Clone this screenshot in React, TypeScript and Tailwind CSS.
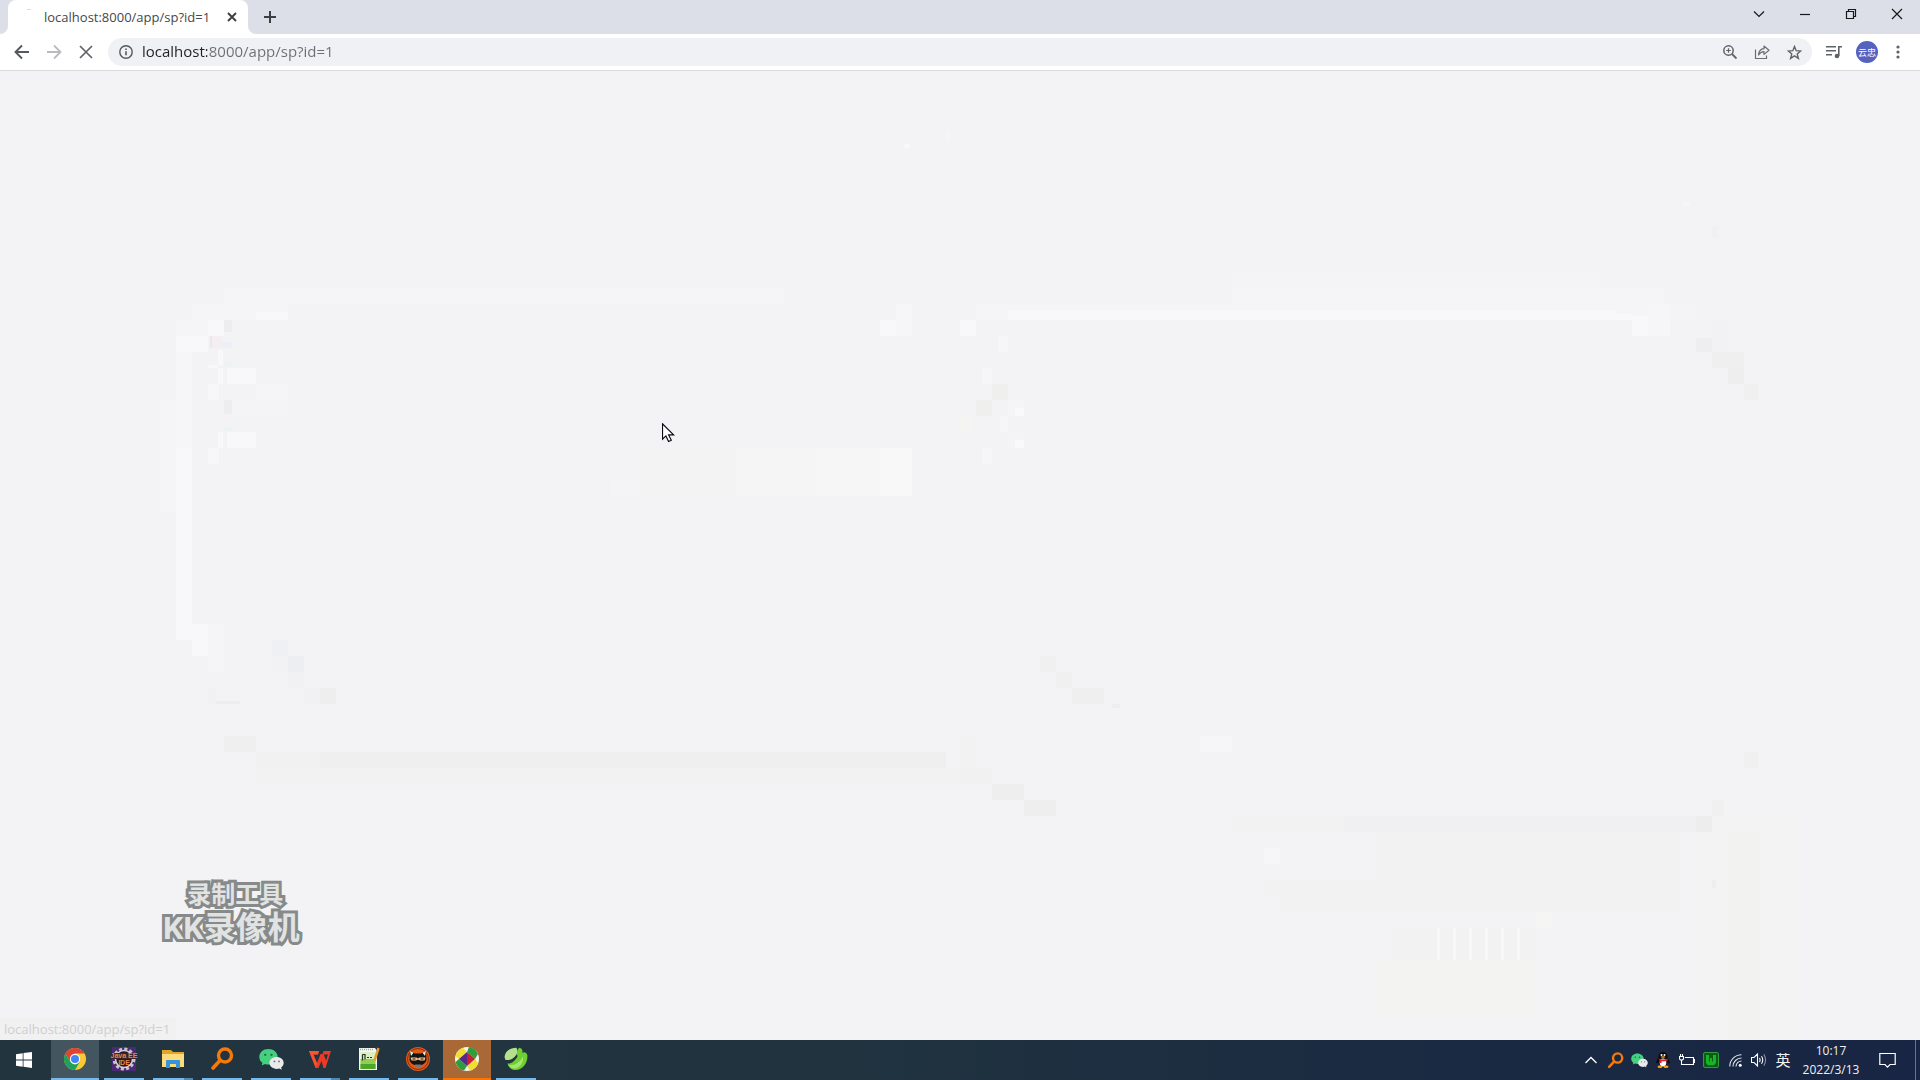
import React, { useState } from "react";

type Patch = [number, number, number, number, string];

// x, y, width, height, fill: faint patches left behind by the fading page
const patches: Patch[] = [
  [224, 288, 560, 16, "#f5f5f7"],
  [192, 304, 96, 16, "#f5f5f7"],
  [256, 312, 32, 8, "#f8f8fa"],
  [176, 320, 32, 16, "#f5f5f7"],
  [208, 320, 16, 16, "#f8f8fa"],
  [176, 336, 32, 16, "#f8f8fa"],
  [176, 352, 16, 96, "#f6f6f8"],
  [176, 448, 16, 192, "#f8f8fa"],
  [160, 400, 16, 112, "#f5f5f7"],
  [192, 624, 16, 32, "#f8f8fa"],
  [208, 624, 16, 48, "#f5f5f7"],
  [224, 320, 8, 12, "#ededef"],
  [212, 336, 10, 12, "#f4eef1"],
  [222, 342, 10, 6, "#eceff5"],
  [210, 336, 2, 12, "#e9e9eb"],
  [218, 350, 5, 15, "#f8f8fa"],
  [208, 365, 10, 3, "#f8f8fa"],
  [224, 362, 8, 4, "#ecf3f1"],
  [227, 368, 29, 16, "#f8f8fa"],
  [218, 368, 5, 16, "#f8f8fa"],
  [208, 384, 11, 16, "#f7f7f9"],
  [256, 384, 32, 16, "#f5f5f7"],
  [224, 400, 8, 14, "#ededef"],
  [232, 400, 56, 16, "#f4f4f6"],
  [224, 427, 8, 4, "#ecf3f1"],
  [227, 432, 29, 16, "#f8f8fa"],
  [218, 432, 5, 16, "#f8f8fa"],
  [208, 448, 11, 16, "#f7f7f9"],
  [896, 304, 16, 32, "#f6f6f8"],
  [880, 320, 16, 16, "#f8f8fa"],
  [960, 320, 16, 16, "#f8f8fa"],
  [904, 144, 6, 4, "#f8f8fa"],
  [946, 130, 4, 12, "#f5f5f7"],
  [610, 480, 30, 16, "#f4f4f6"],
  [640, 448, 96, 48, "#f4f3f4"],
  [736, 448, 80, 48, "#f5f5f6"],
  [816, 448, 64, 48, "#f6f6f7"],
  [880, 448, 32, 48, "#f8f8f8"],
  [272, 640, 16, 16, "#eff0f3"],
  [272, 656, 16, 16, "#f2f2f4"],
  [288, 656, 16, 16, "#edeef1"],
  [288, 672, 16, 16, "#f1f1f3"],
  [304, 688, 16, 16, "#f1f1f3"],
  [320, 688, 16, 16, "#eeeeef"],
  [208, 688, 8, 16, "#f1f1f3"],
  [216, 701, 24, 3, "#ededee"],
  [224, 736, 32, 16, "#efeff0"],
  [256, 752, 64, 16, "#f1f1f2"],
  [320, 752, 626, 16, "#efeff0"],
  [256, 768, 704, 16, "#f2f2f3"],
  [1232, 272, 368, 16, "#f4f4f6"],
  [1232, 288, 432, 16, "#f5f5f7"],
  [976, 304, 694, 6, "#f5f5f7"],
  [976, 310, 32, 10, "#f5f5f7"],
  [1008, 310, 608, 10, "#f8f8fa"],
  [1616, 310, 54, 6, "#f5f5f7"],
  [1616, 314, 16, 6, "#f8f8fa"],
  [1632, 316, 16, 20, "#f8f8fa"],
  [1648, 304, 22, 32, "#f6f6f8"],
  [1670, 304, 26, 16, "#f4f4f6"],
  [998, 336, 10, 16, "#f6f6f8"],
  [982, 368, 10, 16, "#f6f6f8"],
  [992, 384, 16, 16, "#efefee"],
  [976, 400, 16, 16, "#efefee"],
  [960, 416, 12, 16, "#f4f4f2"],
  [1008, 400, 16, 16, "#f5f5f7"],
  [1015, 408, 9, 8, "#f9f9fb"],
  [1000, 416, 8, 16, "#f6f6f8"],
  [1008, 432, 16, 16, "#f4f4f6"],
  [1015, 440, 9, 8, "#f9f9fb"],
  [982, 448, 10, 16, "#f6f6f8"],
  [1682, 202, 8, 4, "#f5f5f7"],
  [1712, 226, 6, 12, "#f0f0f2"],
  [1696, 338, 16, 14, "#eeeef0"],
  [1712, 320, 16, 32, "#f2f2f4"],
  [1712, 352, 32, 16, "#efeff0"],
  [1728, 368, 16, 16, "#eeeeef"],
  [1744, 384, 14, 16, "#f0f0f1"],
  [1040, 656, 16, 16, "#f0f0f1"],
  [1056, 672, 16, 16, "#f0f0f1"],
  [1072, 688, 32, 16, "#efeff0"],
  [1112, 704, 8, 4, "#eeeeef"],
  [1200, 736, 32, 16, "#f6f6f8"],
  [960, 736, 16, 32, "#f2f2f3"],
  [960, 768, 32, 16, "#f1f1f2"],
  [992, 784, 32, 16, "#eeeeef"],
  [1024, 800, 32, 16, "#eeeeef"],
  [1376, 832, 304, 80, "#f2f2f3"],
  [1264, 880, 146, 16, "#f2f2f3"],
  [1280, 896, 96, 16, "#f2f2f3"],
  [1232, 816, 112, 16, "#f2f2f3"],
  [1344, 816, 352, 16, "#f0f0f2"],
  [1696, 816, 106, 224, "#f3f3f3"],
  [1728, 832, 32, 208, "#f2f2f1"],
  [1696, 816, 16, 16, "#ededee"],
  [1712, 800, 12, 16, "#f0f0f1"],
  [1744, 752, 14, 16, "#f0f0f1"],
  [1264, 848, 16, 16, "#f6f6f8"],
  [1712, 880, 4, 8, "#eeeeef"],
  [1392, 928, 144, 32, "#f2f2f2"],
  [1376, 960, 160, 56, "#f3f3f2"],
  [1536, 912, 16, 16, "#f5f5f4"],
  [1437, 928, 3, 32, "#f8f8f6"],
  [1453, 928, 3, 32, "#f8f8f6"],
  [1469, 928, 3, 32, "#f8f8f6"],
  [1485, 928, 3, 32, "#f8f8f6"],
  [1501, 928, 3, 32, "#f8f8f6"],
  [1517, 928, 3, 32, "#f8f8f6"],
];

const iconBtn = "flex items-center justify-center shrink-0";

function Caption({ label, children }: { label: string; children: React.ReactNode }) {
  return (
    <button aria-label={label} className="flex h-7 w-[46px] items-center justify-center">
      <svg width="12" height="12" viewBox="0 0 12 12" fill="none" stroke="#17181a" strokeWidth="1">
        {children}
      </svg>
    </button>
  );
}

function TabStrip() {
  return (
    <header className="flex h-[34px] items-end bg-[#dcdfe7]">
      <div className="flex h-full w-2 items-end bg-white">
        <span className="h-full w-full rounded-br-lg bg-[#dcdfe7]" />
      </div>
      <div className="h-full bg-[#dcdfe7]">
        <div className="flex h-full w-[240px] items-center rounded-t-lg bg-white pl-4 pr-2">
          <span className="flex h-full w-5 items-start pt-[9px]">
            <span className="ml-[3px] h-px w-1 bg-[#dcdcdc]" />
          </span>
          <span className="flex-1 whitespace-nowrap text-[13px] leading-5 text-[#45484c]">
            localhost:8000/app/sp?id=1
          </span>
          <button aria-label="Close tab" className={`${iconBtn} h-4 w-4`}>
            <svg width="10" height="10" viewBox="0 0 10 10" stroke="#3c4043" strokeWidth="1.9">
              <path d="M1 1l8 8M9 1L1 9" />
            </svg>
          </button>
        </div>
      </div>
      <div className="flex h-full w-2 items-end bg-white">
        <span className="h-full w-full rounded-bl-lg bg-[#dcdfe7]" />
      </div>
      <button aria-label="New tab" className={`${iconBtn} h-full w-7`}>
        <svg width="12" height="12" viewBox="0 0 12 12" stroke="#3c4043" strokeWidth="2">
          <path d="M6 0v12M0 6h12" />
        </svg>
      </button>
      <div className="flex flex-1 justify-end self-start">
        <Caption label="Search tabs">
          <path d="M1 3.5l5 5 5-5" strokeWidth="1.2" />
        </Caption>
        <Caption label="Minimize">
          <path d="M1 6.5h10" strokeWidth="1.2" />
        </Caption>
        <Caption label="Restore">
          <path d="M1.5 3.5h7v7h-7zM3.5 3.5v-2h7v7h-2" strokeWidth="1.2" />
        </Caption>
        <Caption label="Close window">
          <path d="M1 1l10 10M11 1L1 11" strokeWidth="1.2" />
        </Caption>
      </div>
    </header>
  );
}

function Toolbar() {
  const [url, setUrl] = useState("localhost:8000/app/sp?id=1");
  return (
    <nav className="flex h-[37px] items-center border-b border-[#d9dadd] bg-white pl-3">
      <button aria-label="Back" className={`${iconBtn} h-5 w-5`}>
        <svg width="16" height="16" viewBox="0 0 16 16" fill="none" stroke="#55585c" strokeWidth="1.9">
          <path d="M15 8H2M8 1.5L1.500 8 8 14.500" />
        </svg>
      </button>
      <button aria-label="Forward" className={`${iconBtn} ml-3 h-5 w-5`}>
        <svg width="16" height="16" viewBox="0 0 16 16" fill="none" stroke="#b9bbbe" strokeWidth="1.8">
          <path d="M1 8h13M8 1.500L14.500 8 8 14.500" />
        </svg>
      </button>
      <button aria-label="Stop loading" className={`${iconBtn} ml-3 h-5 w-5`}>
        <svg width="14" height="14" viewBox="0 0 14 14" stroke="#5f6368" strokeWidth="1.7">
          <path d="M1 1l12 12M13 1L1 13" />
        </svg>
      </button>
      <div className="ml-3 flex h-7 flex-1 items-center rounded-full bg-[#eff1f4] pl-2.5">
        <button aria-label="Site information" className={`${iconBtn} h-4 w-4`}>
          <svg width="14" height="14" viewBox="0 0 14 14" fill="none" stroke="#55585c" strokeWidth="1.4">
            <circle cx="7" cy="7" r="6.200" />
            <path d="M7 6.200v4M7 3.500v1.500" strokeWidth="1.600" />
          </svg>
        </button>
        <input
          aria-label="Address"
          value={url}
          onChange={(e) => setUrl(e.target.value)}
          className="mb-0.5 ml-2 h-6 min-w-0 flex-1 bg-[linear-gradient(90deg,#202124_65px,#6b6f74_65px)] bg-clip-text text-[15px] text-transparent caret-black outline-none"
        />
        <button aria-label="Zoom" className={`${iconBtn} h-5 w-5`}>
          <svg width="14" height="14" viewBox="0 0 14 14" fill="none" stroke="#5f6368" strokeWidth="1.500">
            <circle cx="5.500" cy="5.500" r="4.700" />
            <path d="M9 9l4.500 4.500" strokeWidth="1.900" />
            <path d="M5.500 3.200v4.600M3.200 5.500h4.600" strokeWidth="1.200" />
          </svg>
        </button>
        <button aria-label="Share" className={`${iconBtn} ml-3 h-5 w-5`}>
          <svg width="16" height="16" viewBox="0 0 16 16" fill="none" stroke="#6a6d72" strokeWidth="1.200">
            <path d="M1.500 5.500v9h11v-3" />
            <path d="M4.500 11c.3-3.800 2-6 5.500-6.300V2l5 4.200-5 4.200V7.600C7.600 7.600 6 8.700 4.500 11z" strokeLinejoin="round" />
          </svg>
        </button>
        <button aria-label="Bookmark this page" className={`${iconBtn} ml-3 mr-2 h-5 w-5`}>
          <svg width="15" height="15" viewBox="0 0 15 15" fill="none" stroke="#5f6368" strokeWidth="1.400">
            <path d="M7.500 1.500l1.700 4.200 4.500.3-3.500 2.900 1.200 4.500-3.900-2.500-3.900 2.500 1.200-4.500L1.300 6l4.500-.3z" />
          </svg>
        </button>
      </div>
      <button aria-label="Media controls" className={`${iconBtn} ml-3 h-6 w-5`}>
        <svg width="16" height="14" viewBox="0 0 16 14" fill="none" stroke="#5f6368" strokeWidth="1.600">
          <path d="M0 1.800h10M0 5.800h10M0 9.800h6M12.800 11V1.800h3.200" />
          <circle cx="11" cy="11" r="2.300" fill="#5f6368" stroke="none" />
        </svg>
      </button>
      <button
        aria-label="Profile 云忠"
        className="ml-3 flex h-[22px] w-[22px] items-center justify-center rounded-full bg-[#5562c0] text-[9px] leading-none text-white"
      >
        云忠
      </button>
      <button aria-label="Menu" className={`${iconBtn} ml-2.5 mr-3 h-5 w-5`}>
        <svg width="4" height="14" viewBox="0 0 4 14" fill="#5f6368">
          <circle cx="2" cy="2" r="1.600" />
          <circle cx="2" cy="7" r="1.600" />
          <circle cx="2" cy="12" r="1.600" />
        </svg>
      </button>
    </nav>
  );
}

function WeChat({ size }: { size: number }) {
  return (
    <svg width={size} height={size} viewBox="0 0 24 24">
      <path d="M9 2C4 2 .3 5.300.3 9.500c0 2.400 1.200 4.400 3 5.700L2.600 17.800l3.200-1.500c1 .3 2 .5 3.200.5 5 0 8.900-3.200 8.900-7.300S14 2 9 2z" fill="#45d07f" />
      <circle cx="6" cy="7.500" r="1.100" fill="#1d6b40" />
      <circle cx="12" cy="7.500" r="1.100" fill="#1d6b40" />
      <path d="M17 9.500c-4 0-7 2.500-7 5.700s3 5.800 7 5.800c.9 0 1.700-.1 2.500-.4l2.300 1.200-.5-2.100c1.400-1 2.400-2.700 2.400-4.500 0-3.200-2.900-5.700-6.700-5.700z" fill="#e8eaec" />
      <circle cx="14.800" cy="13.800" r=".9" fill="#777" />
      <circle cx="19.200" cy="13.800" r=".9" fill="#777" />
    </svg>
  );
}

function Search({ size }: { size: number }) {
  return (
    <svg width={size} height={size} viewBox="0 0 24 24" fill="none" stroke="#f57a0a">
      <circle cx="15" cy="8.500" r="6.500" strokeWidth="3.400" />
      <path d="M10 13.500L3 21" strokeWidth="3.600" strokeLinecap="round" />
    </svg>
  );
}

const apps: { name: string; bar: string; bg: string; icon: React.ReactNode }[] = [
  {
    name: "Chrome",
    bar: "w-12 bg-[#76b9ed]",
    bg: "bg-[#43565f]",
    icon: (
      <svg width="22" height="22" viewBox="0 0 24 24">
        <circle cx="12" cy="12" r="12" fill="#fbc934" />
        <path d="M12 6h10.400A12 12 0 0 0 1.600 6l5.200 9z" fill="#db4437" />
        <path d="M1.600 6A12 12 0 0 0 12 24l5.200-9-5.200 3-5.200-3z" fill="#1fa15d" />
        <circle cx="12" cy="12" r="5.600" fill="#fff" />
        <circle cx="12" cy="12" r="4.400" fill="#4285f4" />
      </svg>
    ),
  },
  {
    name: "Java EE IDE",
    bar: "w-10 bg-[#76b9ed]",
    bg: "",
    icon: (
      <span className="relative flex h-6 w-6 items-center justify-center bg-[#4a2a72]">
        <svg className="absolute inset-0" width="24" height="24" viewBox="0 0 24 24" fill="none">
          <circle cx="12" cy="12" r="10" stroke="#c9c2cc" strokeWidth="3" strokeDasharray="3 2.236" />
          <circle cx="12" cy="12" r="8.500" fill="#24182a" stroke="#d6d0d8" strokeWidth="1.500" />
          <path d="M0 6h24v6H0z" fill="#3b2430" />
        </svg>
        <span className="relative whitespace-nowrap text-center font-['Liberation_Sans',sans-serif] text-[7px] font-bold leading-[7px] text-[#f0873a]">
          Java EE
          <br />
          IDE
        </span>
      </span>
    ),
  },
  {
    name: "File Explorer",
    bar: "w-10 bg-[linear-gradient(90deg,#76b9ed_31px,#5289b0_31px)]",
    bg: "",
    icon: (
      <svg width="22" height="18" viewBox="0 0 22 18">
        <path d="M0 0h9l2 2h11v15H0z" fill="#e0a52b" />
        <path d="M0 4h22v13H0z" fill="#fbdb7b" />
        <path d="M4 18v-7q0-1 1-1h12q1 0 1 1v7h-4v-4H8v4z" fill="#3694dd" />
      </svg>
    ),
  },
  { name: "Search", bar: "w-10 bg-[#76b9ed]", bg: "", icon: <Search size={24} /> },
  { name: "WeChat", bar: "w-10 bg-[#76b9ed]", bg: "", icon: <WeChat size={25} /> },
  {
    name: "WPS Office",
    bar: "w-10 bg-[linear-gradient(90deg,#76b9ed_31px,#5289b0_31px)]",
    bg: "",
    icon: (
      <svg width="22" height="17" viewBox="0 0 22 17">
        <path d="M0 0h10l-1 3.500H4.500L8 12l3.500-9h3L17 9.500 19 3.500h-5.500L14.500 0H22l-5.500 17h-2L12.500 10 9.500 17h-3z" fill="#ea3b26" />
        <path d="M0 0h10l-1 3.500H4L8 12l-1 5z" fill="#f5562f" />
      </svg>
    ),
  },
  {
    name: "Editor",
    bar: "w-10 bg-[#76b9ed]",
    bg: "",
    icon: (
      <svg width="24" height="24" viewBox="0 0 24 24">
        <path d="M2 1h16l2 3v19H2z" fill="#f3f6ee" />
        <path d="M3.500 5h15v17h-15z" fill="#dcefc4" />
        <path d="M3.500 12h15v10h-15z" fill="#8ed04f" />
        <path d="M3.500 17h15v5h-15z" fill="#4da52a" />
        <path d="M3 2.500h14" stroke="#9aa" strokeWidth="1.500" strokeDasharray="1 1" />
        <path d="M5.500 7.500v6M5.500 7.500H8v5M10 10.500h2M13 10.500h2" stroke="#26331e" strokeWidth="1.200" fill="none" />
        <path d="M21.500 1L17.500 13.500" stroke="#e89a2d" strokeWidth="2.500" />
      </svg>
    ),
  },
  {
    name: "Cat",
    bar: "w-10 bg-[#76b9ed]",
    bg: "",
    icon: (
      <svg width="24" height="24" viewBox="0 0 24 24">
        <circle cx="12" cy="12" r="12" fill="#e25a16" />
        <circle cx="12" cy="12" r="10.500" fill="none" stroke="#8d3009" strokeWidth="1" />
        <path d="M4 4l5 2.500h6L20 4l.5 8c0 4-4 6.500-8.500 6.500S3.500 16 3.500 12z" fill="#17130f" />
        <path d="M4 4l3.500 1.800L5 9zM20 4l-3.500 1.800L19 9z" fill="#f3ebe3" />
        <path d="M4.500 10.500h6l1.500 1 1.500-1h6l-1 3h-4.500L12 12.500l-2 1H5.500z" fill="#f1c59c" />
        <path d="M6.500 11.500h3v1h-3zM14.500 11.500h3v1h-3z" fill="#17130f" />
        <path d="M9 17.500h6v2.500H9z" fill="#77777a" />
      </svg>
    ),
  },
  {
    name: "KK Recorder",
    bar: "w-12 bg-[#ff7400]",
    bg: "bg-[#a96937]",
    icon: (
      <svg width="24" height="24" viewBox="0 0 24 24">
        <circle cx="12" cy="12" r="12" fill="#f6f4ea" />
        <path d="M8 1A12 12 0 0 0 .5 9L4 12l8-7z" fill="#f0df2c" />
        <path d="M12 5l2-5a12 12 0 0 1 9 7l-3 5z" fill="#2f9d3e" />
        <path d="M4 12L.5 15A12 12 0 0 0 9 23.600l3-4.600z" fill="#2f9d3e" />
        <path d="M20 12l3 4a12 12 0 0 1-8 7.500L12 19z" fill="#f0df2c" />
        <path d="M12 5v14l-8-7z" fill="#57278a" />
        <path d="M12 5v14l8-7z" fill="#c81f35" />
      </svg>
    ),
  },
  {
    name: "Navicat",
    bar: "w-10 bg-[#76b9ed]",
    bg: "",
    icon: (
      <svg width="24" height="24" viewBox="0 0 24 24">
        <path d="M.5 10C1 4 6 1 12.500.8c1.500 3 1 6-1.500 8.700C9 12 5 13.500 1.500 13z" fill="#b4e08e" />
        <path d="M13.500 9.500c-1.200-3.500-.3-7 1.800-8.700 2.700.4 3.700 2.500 3 5.200 2-1.500 4.200-.5 5 2 .8 7-4 15-11.800 15-4 0-7-2.500-8-6.500 4 .5 7.500-2.500 10-7z" fill="#6fce33" />
        <path d="M4.500 18c5.500 1 11-2 14.500-8.500 1 7-4.500 12.500-9.500 12-2.500-.3-4-1.700-5-3.500z" fill="#a4e46d" />
      </svg>
    ),
  },
];

const trayBtn = "flex h-10 w-6 items-center justify-center";

function Taskbar() {
  return (
    <footer className="flex h-10 items-center bg-[linear-gradient(90deg,#22353f_0%,#20333f_45%,#1a2a42_75%,#182544_100%)] text-[#f0f2f4]">
      <button aria-label="Start" className="mr-[3px] flex h-10 w-12 items-center justify-center">
        <svg width="16" height="16" viewBox="0 0 16 16" fill="#fff">
          <path d="M0 2.200L6.700 1.300v6.300H0zM7.500 1.100L16 0v7.600H7.500zM0 8.400h6.700v6.300L0 13.800zM7.500 8.400H16V16l-8.500-1.200z" />
        </svg>
      </button>
      <div className="flex gap-px">
        {apps.map((a) => (
          <button key={a.name} aria-label={a.name} className={`flex h-10 w-12 flex-col items-center ${a.bg}`}>
            <span className="flex flex-1 items-center">{a.icon}</span>
            <span className={`h-0.5 ${a.bar}`} />
          </button>
        ))}
      </div>
      <div className="flex flex-1 items-center justify-end">
        <button aria-label="Show hidden icons" className={trayBtn}>
          <svg width="12" height="8" viewBox="0 0 12 8" fill="none" stroke="#fff" strokeWidth="1.300">
            <path d="M.5 7L6 1.500 11.500 7" />
          </svg>
        </button>
        <button aria-label="Everything" className={trayBtn}>
          <Search size={17} />
        </button>
        <button aria-label="WeChat messages" className={trayBtn}>
          <WeChat size={17} />
        </button>
        <button aria-label="QQ" className={trayBtn}>
          <svg width="16" height="16" viewBox="0 0 16 16">
            <path d="M8 0C5 0 3.500 2 3.500 5L1 10.500l1 1L3.500 10c.3 3 2 4.500 4.500 4.500s4.200-1.500 4.500-4.500l1.500 1.500 1-1L12.500 5C12.500 2 11 0 8 0z" fill="#0a0a0a" />
            <ellipse cx="8" cy="10.500" rx="3.300" ry="4" fill="#fff" />
            <circle cx="6.500" cy="3" r="1" fill="#fff" />
            <circle cx="9.500" cy="3" r="1" fill="#fff" />
            <path d="M3.300 6.500c3 1.300 6.400 1.300 9.400 0v2c-3 1-5 1-6.200.8V11H4.700V8.700z" fill="#e0222a" />
            <ellipse cx="8" cy="5" rx="2.300" ry=".8" fill="#f5a31c" />
            <ellipse cx="5" cy="14.800" rx="2.500" ry="1.200" fill="#f5a31c" />
            <ellipse cx="11" cy="14.800" rx="2.500" ry="1.200" fill="#f5a31c" />
          </svg>
        </button>
        <button aria-label="Battery" className={trayBtn}>
          <svg width="16" height="13" viewBox="0 0 16 13" fill="none" stroke="#fff" strokeWidth="1.100">
            <path d="M6 3.500h8.500v7H4.500M14.500 5.500h1v3h-1M1.500 0v2M3.500 0v2M.5 2.500h4v2.500l-1 1h-2l-1-1zM2.500 6v4.500h2" />
          </svg>
        </button>
        <button aria-label="WPS" className={trayBtn}>
          <svg width="16" height="16" viewBox="0 0 16 16" fill="none">
            <rect x=".5" y=".5" width="15" height="15" rx="1.500" fill="#0a5c17" stroke="#2f9d3a" />
            <path d="M3 3v8l2 2.200h6L13 11V3h-3v6.500H9V6H7v3.500H6V3z" fill="#19b32a" />
          </svg>
        </button>
        <button aria-label="Network" className={trayBtn}>
          <svg width="13" height="13" viewBox="0 0 13 13" fill="none" stroke="#dfe3e8" strokeWidth="1.100">
            <path d="M.8 12.500A11.700 11.700 0 0 1 12.500.8M4 12.500A8.500 8.500 0 0 1 12.500 4M7 12.500A5.500 5.500 0 0 1 12.500 7" />
            <circle cx="11.200" cy="11.300" r="1.500" fill="#fff" stroke="none" />
          </svg>
        </button>
        <button aria-label="Volume" className={trayBtn}>
          <svg width="16" height="14" viewBox="0 0 16 14" fill="none" stroke="#fff" strokeWidth="1.100">
            <path d="M.5 4.500H3L6.500 1v12L3 9.500H.5zM8.500 5q1.200 2 0 4M10.500 3.200q2.500 3.800 0 7.600" />
            <path d="M12.800 1.200q3.600 5.800 0 11.600" stroke="#8791a3" />
          </svg>
        </button>
        <button aria-label="Input language 英" className="flex h-10 w-6 items-center justify-center text-[15px]">
          英
        </button>
        <button aria-label="Clock" className="flex h-10 w-[72px] flex-col items-center justify-center text-[12px] leading-[19px]">
          <span>10:17</span>
          <span>2022/3/13</span>
        </button>
        <button aria-label="Notifications" className="flex h-10 w-10 items-center justify-center">
          <svg width="17" height="17" viewBox="0 0 17 17" fill="none" stroke="#fff" strokeWidth="1.200">
            <path d="M.8 1.500h15.400v11H11l-2.500 2.700L6 12.500H.8z" />
          </svg>
        </button>
        <button aria-label="Show desktop" className="ml-2 h-10 w-[5px] border-l border-[#6c7587]" />
      </div>
    </footer>
  );
}

export default function App() {
  return (
    <div className="flex h-screen flex-col overflow-hidden bg-[#f3f3f5] font-['Open_Sans','Noto_Sans_CJK_SC',sans-serif]">
      <TabStrip />
      <Toolbar />
      <main className="relative min-h-0 flex-1 overflow-hidden">
        <svg
          aria-hidden="true"
          className="absolute inset-0 h-full w-full"
          viewBox="0 71 1920 969"
          preserveAspectRatio="none"
          shapeRendering="crispEdges"
        >
          {patches.map(([x, y, w, h, fill], i) => (
            <rect key={i} x={x} y={y} width={w} height={h} fill={fill} />
          ))}
        </svg>
        <svg className="absolute left-[662px] top-[352px]" width="13" height="20" viewBox="0 0 13 20">
          <path
            d="M.5.800v15.400l3.400-3.300 2.700 5.600 2.700-1.200-2.700-5.400h5z"
            fill="#fff"
            stroke="#0b0b12"
            strokeWidth="1.200"
          />
        </svg>
        <div className="absolute bottom-[93px] left-[163px] flex flex-col items-center whitespace-nowrap font-['Roboto','Noto_Sans_CJK_SC',sans-serif] font-bold text-[#e1e3e3] [-webkit-text-stroke:6px_#868a8a] [paint-order:stroke_fill]">
          <span className="pl-2 text-[24px] leading-7">录制工具</span>
          <span className="text-[32px] leading-[38px]">KK录像机</span>
        </div>
        <div className="absolute bottom-0 left-0 h-[23px] w-44 bg-[#f1f1f2] pl-1 text-[13px] leading-6 text-[#cfcfd1]">
          localhost:8000/app/sp?id=1
        </div>
      </main>
      <Taskbar />
    </div>
  );
}
